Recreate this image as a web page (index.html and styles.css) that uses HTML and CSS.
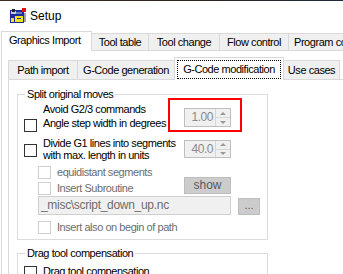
FILE: index.html
```html
<!DOCTYPE html>
<html>
<head>
<meta charset="utf-8">
<link rel="stylesheet" href="styles.css">
</head>
<body>
<div class="win">
  <div class="topline"></div>
  <div class="titlebar">
    <svg class="appicon" viewBox="0 0 17 15" width="17" height="15">
      <rect x="0" y="2" width="14" height="13" fill="#1c2c9c"/>
      <rect x="1" y="3" width="5" height="3" fill="#c8c8d8"/>
      <rect x="2" y="1" width="3" height="3" fill="#202040"/>
      <rect x="6" y="4" width="6" height="2" fill="#6a78d0"/>
      <rect x="5" y="8" width="8" height="6" fill="#f2e21a"/>
      <rect x="1" y="10" width="3" height="4" fill="#f2e21a"/>
      <rect x="7" y="10" width="4" height="1" fill="#1c2c9c"/>
      <rect x="12" y="0" width="4" height="4" fill="#e01010"/>
      <rect x="14" y="5" width="2" height="9" fill="#a0a0b0"/>
    </svg>
    <span class="title">Setup</span>
  </div>
  <div class="tabs outer">
    <div class="tab sel t1">Graphics Import</div>
    <div class="tab t2">Tool table</div>
    <div class="tab t3">Tool change</div>
    <div class="tab t4">Flow control</div>
    <div class="tab t5">Program control</div>
  </div>
  <div class="page">
    <div class="tabs inner">
      <div class="itab i1">Path import</div>
      <div class="itab i2">G-Code generation</div>
      <div class="itab sel i3"><span class="focus">G-Code modification</span></div>
      <div class="itab i4">Use cases</div>
    </div>
    <div class="ipage">
      <fieldset class="grp g1">
        <legend>Split original moves</legend>
        <div class="row ra">
          <span class="cb"></span>
          <div class="lbl l14">Avoid G2/3 commands<br>Angle step width in degrees</div>
          <div class="num dis"><span class="val">1.00</span><span class="spin"><span class="up"></span><span class="dn"></span></span></div>
        </div>
        <div class="row rb">
          <span class="cb"></span>
          <div class="lbl l12">Divide G1 lines into segments<br>with max. length in units</div>
          <div class="num dis"><span class="val">40.0</span><span class="spin"><span class="up"></span><span class="dn"></span></span></div>
        </div>
        <div class="row rc">
          <span class="cb dis ind"></span>
          <div class="lbl dtext">equidistant segments</div>
        </div>
        <div class="row rd">
          <span class="cb dis ind"></span>
          <div class="lbl dtext sub">Insert Subroutine</div>
          <div class="btn show">show</div>
        </div>
        <div class="row re">
          <div class="field">_misc\script_down_up.nc</div>
          <div class="btn dots">...</div>
        </div>
        <div class="row rf">
          <span class="cb dis ind"></span>
          <div class="lbl dtext">Insert also on begin of path</div>
        </div>
      </fieldset>
      <fieldset class="grp g2">
        <legend>Drag tool compensation</legend>
        <div class="row rg">
          <span class="cb"></span>
          <div class="lbl">Drag tool compensation</div>
        </div>
      </fieldset>
    </div>
  </div>
  <div class="redmark"></div>
</div>
</body>
</html>
```

FILE: styles.css
```css
* { box-sizing: border-box; }
html, body { margin: 0; padding: 0; }
body {
  width: 343px;
  height: 274px;
  overflow: hidden;
  background: #fff;
  font-family: "Liberation Sans", Arial, sans-serif;
  font-size: 11px;
  letter-spacing: -0.45px;
  color: #000;
}
.win { position: relative; width: 343px; height: 274px; overflow: hidden; }
.topline { height: 1px; background: linear-gradient(90deg, #3b2b1f, #2c2420 60%, #1f2a3d); }
.titlebar { height: 30px; display: flex; align-items: center; padding-left: 10px; }
.appicon { display: block; margin-top: -1px; }
.title { font-size: 12px; letter-spacing: 0; margin-left: 3px; color: #000; }

.tabs { display: flex; align-items: flex-end; white-space: nowrap; }
.outer { height: 19px; padding-left: 1px; }
.tab {
  height: 17px;
  border: 1px solid #d9d9d9;
  border-bottom: 0;
  margin-right: -1px;
  background: #f0f0f0;
  line-height: 16px;
  text-align: center;
  flex: none;
}
.tab.sel {
  height: 20px;
  margin-bottom: -1px;
  background: #fff;
  line-height: 17px;
  position: relative;
  z-index: 1;
  text-align: left;
  padding-left: 7px;
}
.t1 { width: 91px; }
.t2 { width: 58px; }
.t3 { width: 72px; }
.t4 { width: 70px; }
.t5 { width: 80px; text-align: left; padding-left: 5px; }

.page {
  border-top: 1px solid #d9d9d9;
  border-left: 1px solid #d9d9d9;
  margin-left: 1px;
  padding: 6px 0 0 6px;
  height: 240px;
}
.inner { height: 22px; }
.itab {
  height: 19px;
  border: 1px solid #d9d9d9;
  border-bottom: 0;
  margin-right: -1px;
  background: #f0f0f0;
  line-height: 18px;
  text-align: center;
  flex: none;
}
.itab.sel {
  height: 23px;
  margin-bottom: -1px;
  background: #fff;
  position: relative;
  z-index: 1;
  padding: 2px 2px 2px 2px;
  line-height: 17px;
}
.focus { display: block; border: 1px dotted #000; height: 19px; line-height: 17px; }
.i1 { width: 70px; }
.i2 { width: 98px; }
.i3 { width: 110px; }
.i4 { width: 57px; }

.ipage {
  border-top: 1px solid #d9d9d9;
  border-left: 1px solid #d9d9d9;
  padding: 0 0 0 8px;
  height: 200px;
}
.grp {
  width: 251px;
  margin: 7px 0 0 0;
  border: 1px solid #dcdcdc;
  padding: 1px 6px 5px 6px;
  min-width: 0;
}
.grp legend {
  padding: 0 2px;
  margin-left: 1px;
  line-height: 14px;
  color: #000;
}
.g2 { margin-top: 6px; padding-top: 4px; }

.row { display: flex; align-items: flex-start; }
.cb {
  width: 13px;
  height: 13px;
  border: 1px solid #333;
  background: #fff;
  flex: none;
}
.cb.dis { border-color: #cfcfcf; }
.cb.ind { margin-left: 14px; }
.lbl {
  margin-left: 6px;
  white-space: nowrap;
  line-height: 13px;
  width: 141px;
  flex: none;
}
.l14 { line-height: 14px; }
.l12 { line-height: 12px; }
.dtext { color: #6d6d6d; width: auto; }
.sub { width: 127px; }

.ra { height: 28px; }
.ra .cb { margin-top: 17px; }
.ra .num { margin-top: 6px; }
.rb { margin-top: 7px; height: 24px; }
.rb .cb { margin-top: 7px; }
.rb .num { margin-top: 3px; height: 18px; }
.rc { margin-top: 5px; height: 13px; }
.rd { margin-top: 3px; height: 13px; }
.rd .lbl { margin-top: 0; }
.rd .show { margin-top: -5px; }
.re { margin-top: 1px; height: 19px; }
.rf { margin-top: 6px; height: 13px; }
.rg { margin-top: 2px; }
.rg .lbl { margin-top: -1px; }

.num {
  width: 47px;
  height: 19px;
  border: 1px solid #bfbfbf;
  background: #f0f0f0;
  display: flex;
  flex: none;
}
.num .val {
  flex: 1;
  text-align: right;
  padding-right: 2px;
  color: #8a8a8a;
  line-height: 17px;
  font-size: 12px;
}
.spin {
  width: 15px;
  display: flex;
  flex-direction: column;
  border-left: 1px solid #d6d6d6;
}
.spin span { flex: 1; display: flex; align-items: center; justify-content: center; }
.spin .up { border-bottom: 1px solid #d6d6d6; }
.spin .up::after {
  content: "";
  border-left: 3px solid transparent;
  border-right: 3px solid transparent;
  border-bottom: 3px solid #9a9a9a;
}
.spin .dn::after {
  content: "";
  border-left: 3px solid transparent;
  border-right: 3px solid transparent;
  border-top: 3px solid #9a9a9a;
}

.btn {
  background: #cccccc;
  border: 1px solid #bdbdbd;
  color: #5a5a5a;
  text-align: center;
  flex: none;
}
.show { width: 47px; height: 17px; line-height: 15px; font-size: 12px; letter-spacing: 0; }
.field {
  margin-left: 14px;
  width: 193px;
  height: 19px;
  border: 1px solid #cfcfcf;
  background: #f0f0f0;
  color: #6d6d6d;
  line-height: 17px;
  padding-left: 2px;
  font-size: 12px;
  letter-spacing: -0.3px;
  flex: none;
}
.dots { margin-left: 7px; margin-top: 2px; width: 22px; height: 17px; line-height: 13px; letter-spacing: 0; }

.redmark {
  position: absolute;
  left: 168px;
  top: 98px;
  width: 74px;
  height: 34px;
  border: 2px solid #ff0000;
}
```
